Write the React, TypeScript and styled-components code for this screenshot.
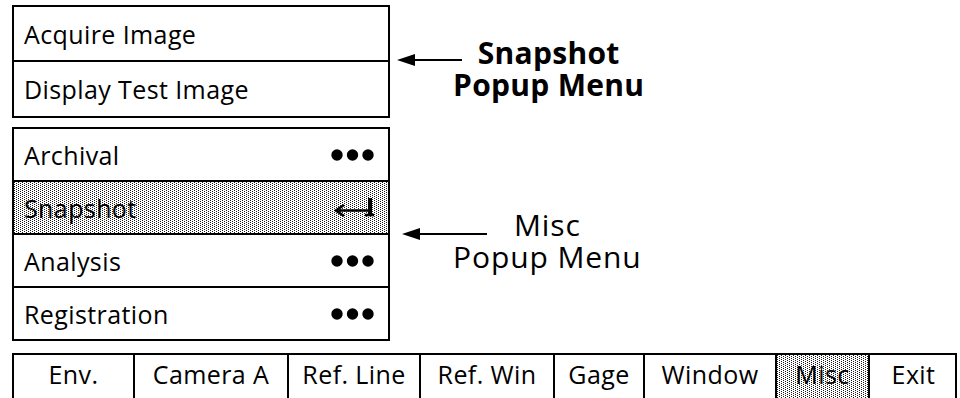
import styled, { createGlobalStyle } from "styled-components";

const GlobalStyle = createGlobalStyle`
  html, body {
    margin: 0;
    padding: 0;
    background: #fff;
    overflow: hidden;
  }
  body {
    font-family: "Open Sans", "Liberation Sans", sans-serif;
    color: #000;
  }
`;

// dithered grey used for the highlighted entries
const stipple = `
  background-color: #fff;
  background-image:
    conic-gradient(from 270deg at 1px 1px, #1a1a1a 90deg, transparent 0),
    conic-gradient(from 270deg at 1px 1px, #1a1a1a 90deg, transparent 0);
  background-size: 4px 2px;
  background-position: 0 0, 2px 1px;
`;

const Page = styled.div`
  display: flex;
  flex-direction: column;
  padding: 5px 0 0 12px;
  width: 960px;
  height: 398px;
  box-sizing: border-box;
  overflow: hidden;
`;

const Section = styled.div<{ $gap?: number }>`
  display: flex;
  flex-direction: row;
  align-items: flex-start;
  margin-top: ${(p) => p.$gap ?? 0}px;
`;

const Menu = styled.div`
  display: flex;
  flex-direction: column;
  width: 378px;
  box-sizing: border-box;
  border: 2px solid #000;
`;

const MenuRow = styled.div<{ $h: number; $selected?: boolean }>`
  display: flex;
  align-items: center;
  justify-content: space-between;
  height: ${(p) => p.$h}px;
  padding: 0 14px 0 10px;
  font-size: 25px;
  letter-spacing: 0.4px;
  & + & {
    border-top: 2px solid #000;
  }
  ${(p) => (p.$selected ? stipple : "")}
`;

const Callout = styled.div<{ $top: number; $left: number }>`
  display: flex;
  flex-direction: row;
  align-items: flex-start;
  margin-top: ${(p) => p.$top}px;
  margin-left: ${(p) => p.$left}px;
`;

const ArrowSvg = styled.svg<{ $dy: number; $overlap: number }>`
  display: block;
  margin-top: ${(p) => p.$dy}px;
  margin-right: ${(p) => -p.$overlap}px;
  flex: none;
`;

const CalloutText = styled.div<{ $bold?: boolean }>`
  display: flex;
  flex-direction: column;
  align-items: center;
  font-size: 30px;
  line-height: 32px;
  font-weight: ${(p) => (p.$bold ? 700 : 400)};
  letter-spacing: ${(p) => (p.$bold ? 0.3 : 0.9)}px;
`;

const Bar = styled.div`
  display: flex;
  flex-direction: row;
  margin-top: 12px;
  height: 64px;
  flex: none;
  width: 945px;
  box-sizing: border-box;
  border: 2px solid #000;
`;

const BarCell = styled.div<{ $w: number; $selected?: boolean }>`
  display: flex;
  align-items: flex-start;
  justify-content: center;
  width: ${(p) => p.$w}px;
  flex: none;
  box-sizing: border-box;
  padding-top: 2px;
  font-size: 25px;
  letter-spacing: 0.4px;
  & + & {
    border-left: 2px solid #000;
  }
  ${(p) => (p.$selected ? stipple : "")}
`;

function Dots() {
  return (
    <svg width="43" height="12" viewBox="0 0 43 12">
      <circle cx="6" cy="6" r="5.7" fill="#000" />
      <circle cx="21.5" cy="6" r="5.7" fill="#000" />
      <circle cx="37" cy="6" r="5.7" fill="#000" />
    </svg>
  );
}

function ReturnMark() {
  return (
    <svg width="40" height="22" viewBox="0 0 40 22">
      <polyline points="10,8 2,13.5 10,19" fill="none" stroke="#000" strokeWidth="2.6" />
      <line x1="2" y1="13.5" x2="36" y2="13.5" stroke="#000" strokeWidth="2.6" />
      <line x1="36" y1="1" x2="36" y2="18" stroke="#000" strokeWidth="4" />
      <line x1="31" y1="18" x2="40" y2="18" stroke="#000" strokeWidth="2.6" />
    </svg>
  );
}

function Arrow({ w, dy, overlap }: { w: number; dy: number; overlap: number }) {
  return (
    <ArrowSvg width={w} height="14" viewBox={`0 0 ${w} 14`} $dy={dy} $overlap={overlap}>
      <path d="M0 7 L18 1 L18 13 Z" fill="#000" />
      <line x1="16" y1="7" x2={w} y2="7" stroke="#000" strokeWidth="2" />
    </ArrowSvg>
  );
}

const miscItems = [
  { label: "Archival", mark: "dots" },
  { label: "Snapshot", mark: "return", selected: true },
  { label: "Analysis", mark: "dots" },
  { label: "Registration", mark: "dots" },
];

const barItems = [
  { label: "Env.", w: 119 },
  { label: "Camera A", w: 154 },
  { label: "Ref. Line", w: 132 },
  { label: "Ref. Win", w: 134 },
  { label: "Gage", w: 90 },
  { label: "Window", w: 132 },
  { label: "Misc", w: 93, selected: true },
  { label: "Exit", w: 89 },
];

export default function App() {
  return (
    <>
      <GlobalStyle />
      <Page>
        <Section>
          <Menu>
            <MenuRow $h={53}>Acquire Image</MenuRow>
            <MenuRow $h={54}>Display Test Image</MenuRow>
          </Menu>
          <Callout $top={32} $left={7}>
            <Arrow w={65} dy={16} overlap={9} />
            <CalloutText $bold>
              <span>Snapshot</span>
              <span>Popup Menu</span>
            </CalloutText>
          </Callout>
        </Section>
        <Section $gap={9}>
          <Menu>
            {miscItems.map((item) => (
              <MenuRow key={item.label} $h={51} $selected={item.selected}>
                <span>{item.label}</span>
                {item.mark === "dots" ? <Dots /> : <ReturnMark />}
              </MenuRow>
            ))}
          </Menu>
          <Callout $top={82} $left={12}>
            <Arrow w={85} dy={18} overlap={34} />
            <CalloutText>
              <span>Misc</span>
              <span>Popup Menu</span>
            </CalloutText>
          </Callout>
        </Section>
        <Bar>
          {barItems.map((item) => (
            <BarCell key={item.label} $w={item.w} $selected={item.selected}>
              {item.label}
            </BarCell>
          ))}
        </Bar>
      </Page>
    </>
  );
}
